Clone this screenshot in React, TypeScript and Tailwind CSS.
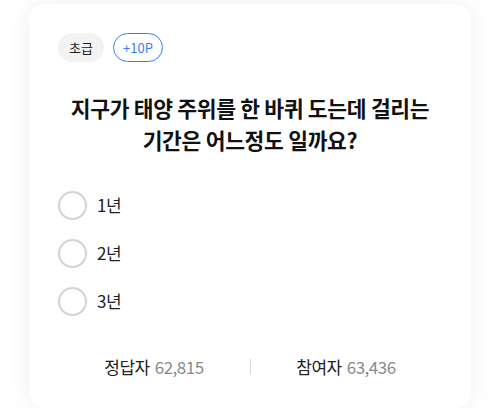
const options = ['1년', '2년', '3년'];

export default function App() {
  return (
    <div className="min-h-[408px] w-[500px] bg-white pt-1 font-['Noto_Sans_CJK_KR','Noto_Sans',sans-serif]">
      <div className="mx-auto h-[404px] w-[442px] rounded-[16px] bg-white px-[29px] pt-[29px] shadow-[0_0_24px_rgba(0,0,0,0.07)]">
        {/* badges */}
        <div className="flex gap-[9px]">
          <span className="flex h-[29px] w-[46px] items-center justify-center rounded-full bg-[#f3f3f3] text-[13px] text-[#222]">
            초급
          </span>
          <span className="flex h-[29px] w-[50px] items-center justify-center rounded-full border border-[#3b7cf6] text-[13px] text-[#3b7cf6]">
            +10P
          </span>
        </div>

        {/* question */}
        <h1 className="mt-[30px] text-center text-[21.5px] font-bold leading-[32px] tracking-[-0.3px] text-[#111]">
          지구가 태양 주위를 한 바퀴 도는데 걸리는
          <br />
          기간은 어느정도 일까요?
        </h1>

        {/* options */}
        <div className="mt-[25px]">
          {options.map(o => (
            <div key={o} className="flex h-[48px] items-center gap-[10px]">
              <span className="h-[29px] w-[29px] rounded-full border-2 border-[#d2d2d2]" />
              <span className="text-[17px] tracking-[-0.5px] text-[#222]">{o}</span>
            </div>
          ))}
        </div>

        {/* stats */}
        <div className="mt-[29px] flex items-center justify-center text-[17px] tracking-[-0.5px]">
          <div className="flex w-[191px] justify-center gap-[5px]">
            <span className="text-[#222]">정답자</span>
            <span className="text-[#8a8a8a]">62,815</span>
          </div>
          <div className="h-[15px] w-px bg-[#d5d5d5]" />
          <div className="flex w-[191px] justify-center gap-[5px]">
            <span className="text-[#222]">참여자</span>
            <span className="text-[#8a8a8a]">63,436</span>
          </div>
        </div>
      </div>
    </div>
  );
}
